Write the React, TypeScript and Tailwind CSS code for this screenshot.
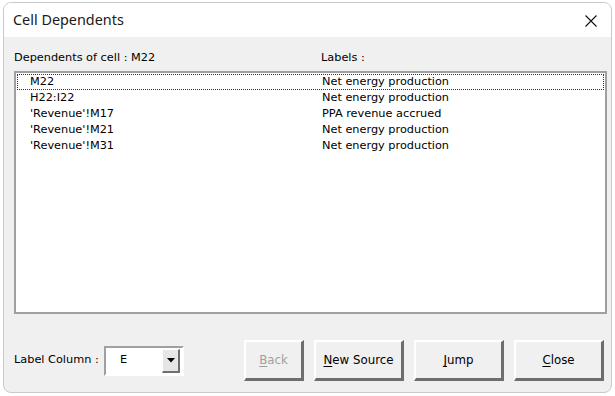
import React from "react"

const rows = [
  { ref: "M22", label: "Net energy production" },
  { ref: "H22:I22", label: "Net energy production" },
  { ref: "'Revenue'!M17", label: "PPA revenue accrued" },
  { ref: "'Revenue'!M21", label: "Net energy production" },
  { ref: "'Revenue'!M31", label: "Net energy production" },
]

const ui = { fontFamily: '"DejaVu Sans", Verdana, sans-serif' }

function DlgButton({ label, hot, disabled, width }: { label: string; hot: number; disabled?: boolean; width: string }) {
  return (
    <button
      disabled={disabled}
      className={`${width} h-[41px] flex items-center justify-center pt-[2px] bg-[#f0f0f0] border-t-2 border-l-2 border-t-white border-l-white border-b-[3px] border-r-[3px] border-b-[#6e6e6e] border-r-[#6e6e6e] text-[11.8px] ${
        disabled ? "text-[#a0a0a0]" : "text-black"
      }`}
    >
      <span>
        {label.slice(0, hot)}
        <span className="underline underline-offset-2">{label[hot]}</span>
        {label.slice(hot + 1)}
      </span>
    </button>
  )
}

export default function App() {
  return (
    <div className="w-[615px] h-[396px] bg-white pl-[3px] pt-[2px]" style={ui}>
      <div className="w-[609px] h-[391px] rounded-lg border border-[#c9c9c9] overflow-hidden flex flex-col bg-[#f0f0f0]">
        {/* title bar */}
        <div className="h-[34px] shrink-0 bg-white flex items-center justify-between pl-[9px] pr-[14px]">
          <span className="text-[14.4px] text-[#1a1a1a]" style={{ fontFamily: '"Noto Sans", "Open Sans", sans-serif' }}>
            Cell Dependents
          </span>
          <svg width="12" height="12" viewBox="0 0 12 12" className="mt-[1px]">
            <path d="M0.5 0.5 L11.5 11.5 M11.5 0.5 L0.5 11.5" stroke="#111" strokeWidth="1.1" />
          </svg>
        </div>

        {/* body */}
        <div className="flex-1 flex flex-col pl-[10px] pr-[3px]">
          <div className="flex h-[16px] mt-[13px] text-[11.3px] leading-[16px] text-black">
            <span className="w-[307px]">Dependents of cell : M22</span>
            <span>Labels :</span>
          </div>

          <div className="mt-[5px] w-[593px] h-[243px] bg-white border-2 border-[#a0a0a0] pt-[1px] pl-[1px]">
            {rows.map((r, i) => (
              <div
                key={i}
                className={`w-[587px] h-[16px] flex items-center text-[11.3px] text-black ${
                  i === 0 ? "outline outline-1 outline-dotted outline-[#333] -outline-offset-1" : ""
                }`}
              >
                <span className="w-[305px] pl-[13px]">{r.ref}</span>
                <span>{r.label}</span>
              </div>
            ))}
          </div>

          <div className="mt-[26px] flex items-center">
            <span className="text-[11.3px] text-black w-[90px]">Label Column :</span>
            <div className="w-[80px] h-[30px] border-t-2 border-l-2 border-t-[#a0a0a0] border-l-[#a0a0a0] border-b-2 border-r-2 border-b-white border-r-white">
              <div className="w-full h-full bg-white flex items-center justify-between pl-[14px] pr-[2px]">
                <span className="text-[11.3px] text-black">E</span>
                <div className="w-[18px] h-[24px] bg-[#e6e6e6] border-t border-l border-t-white border-l-white border-b-2 border-r-2 border-b-[#6e6e6e] border-r-[#6e6e6e] flex items-center justify-center">
                  <svg width="8" height="5" viewBox="0 0 8 5">
                    <path d="M0 0 H8 L4 4.5 Z" fill="#000" />
                  </svg>
                </div>
              </div>
            </div>

            <div className="ml-[60px] flex gap-[10px]">
              <DlgButton label="Back" hot={0} disabled width="w-[60px]" />
              <DlgButton label="New Source" hot={0} width="w-[90px]" />
              <DlgButton label="Jump" hot={0} width="w-[90px]" />
              <DlgButton label="Close" hot={0} width="w-[90px]" />
            </div>
          </div>
        </div>
      </div>
    </div>
  )
}
